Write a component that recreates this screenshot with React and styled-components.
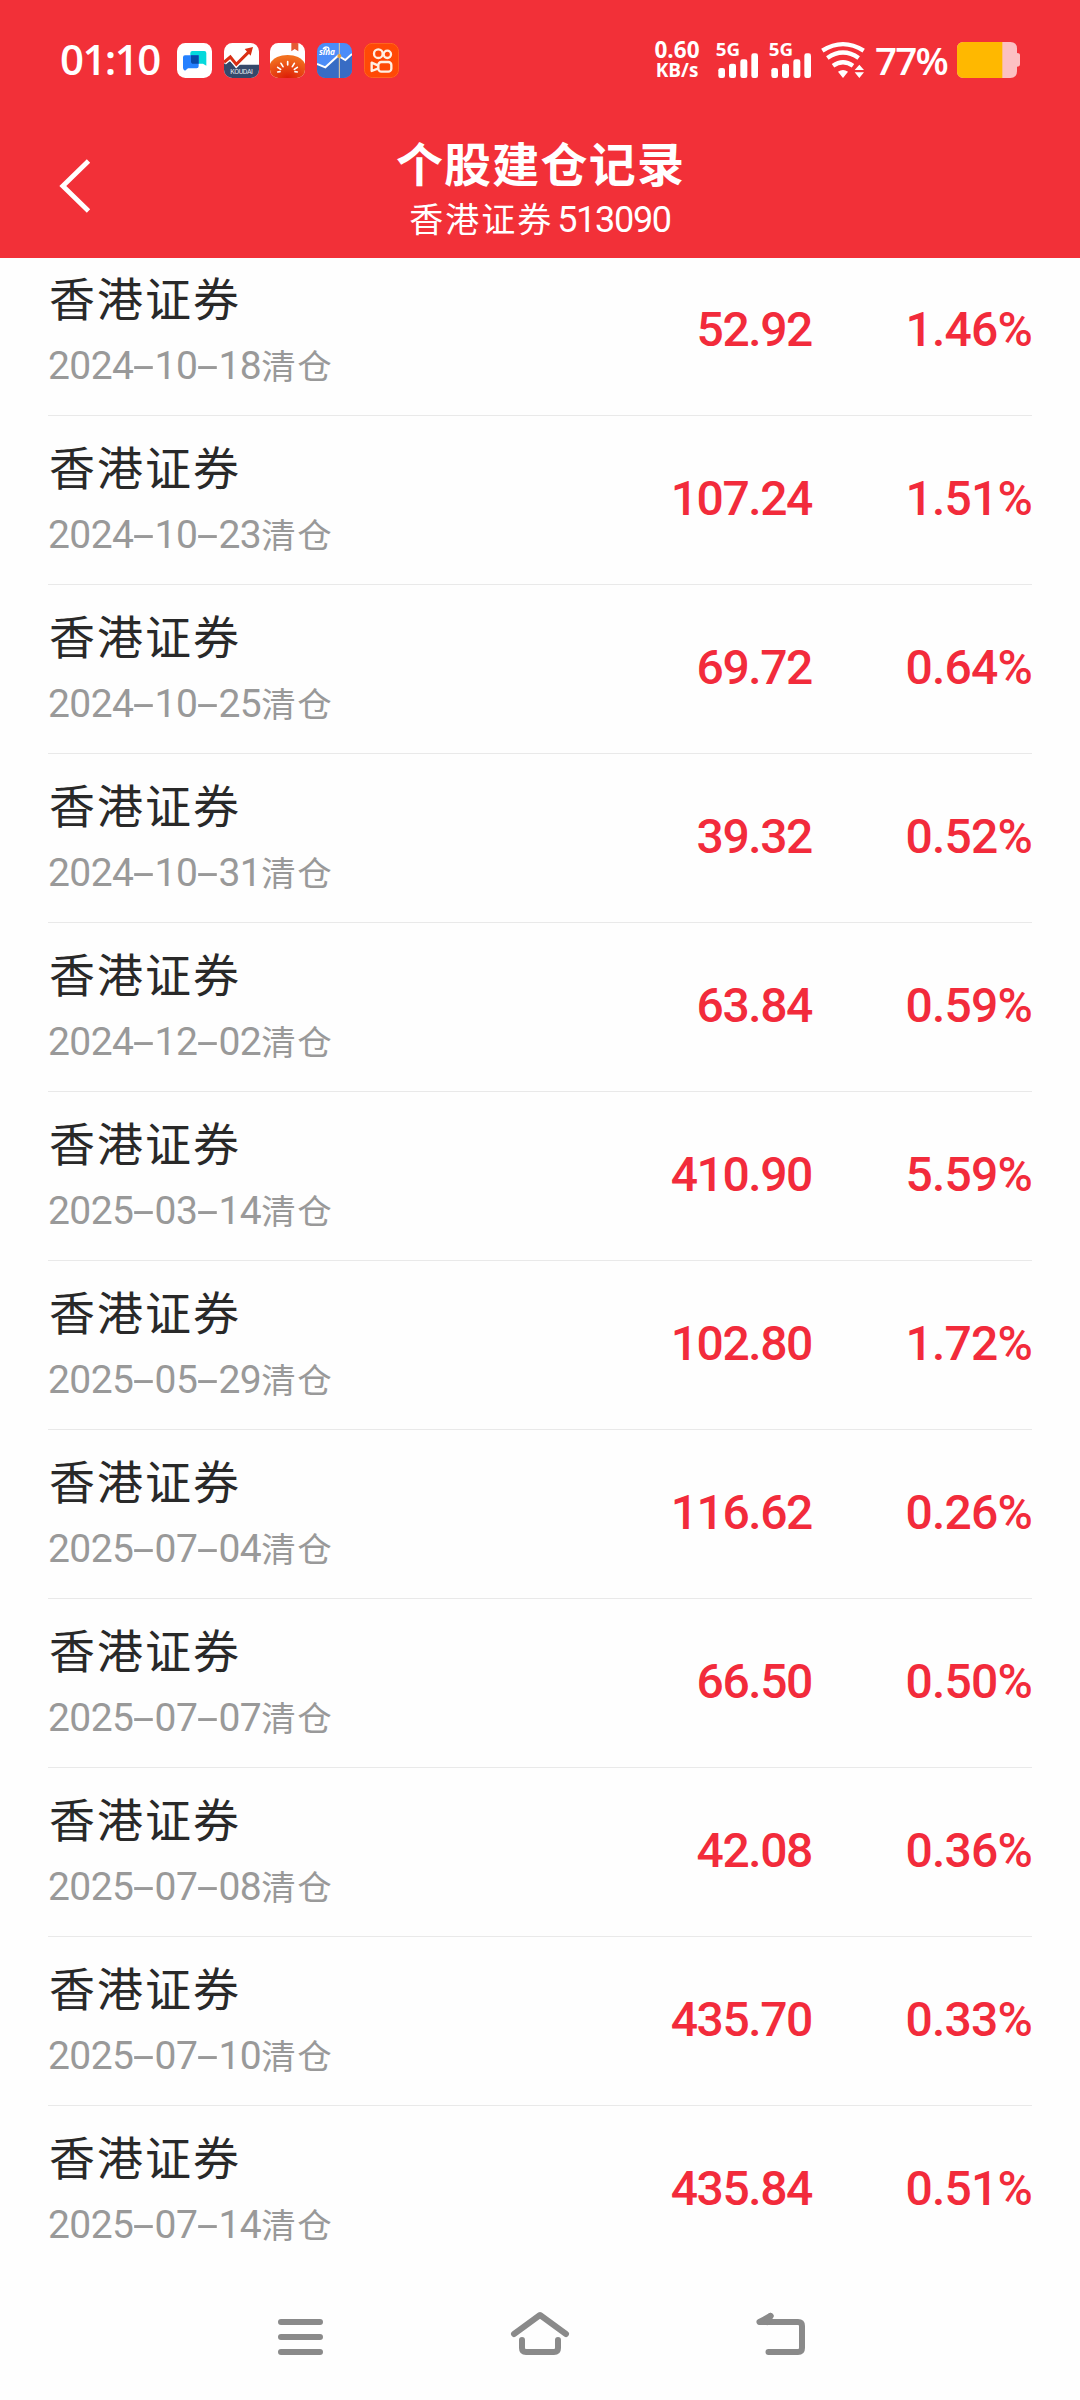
import React from 'react';
import styled, { createGlobalStyle } from 'styled-components';

const GlobalStyle = createGlobalStyle`
    * {
        box-sizing: border-box;
    }
    body {
        margin: 0;
        background: #fefefe;
        font-family: Roboto, "Noto Sans CJK SC", sans-serif;
    }
    svg {
        display: block;
        flex: none;
        overflow: visible;
    }
`;

const Screen = styled.div`
    width: 1080px;
    height: 2400px;
    overflow: hidden;
    display: flex;
    flex-direction: column;
    background: #fefefe;
`;

const Top = styled.header`
    flex: none;
    height: 258px;
    background: #f23038;
    color: #fff;
`;

const StatusBar = styled.div`
    height: 120px;
    padding: 0 60px 0 60px;
    display: flex;
    align-items: center;
    font-family: "Open Sans", sans-serif;
`;

const Clock = styled.div`
    width: 117px;
    padding-bottom: 2px;
    font-size: 42px;
    line-height: 60px;
    font-weight: 600;
    letter-spacing: -1.6px;
    white-space: nowrap;
`;

const AppIcons = styled.div`
    display: flex;
    gap: 11.7px;
`;

const StatusRight = styled.div`
    margin-left: auto;
    display: flex;
    align-items: center;
`;

const Speed = styled.div`
    width: 50px;
    margin-right: 14px;
    padding-bottom: 1px;
    text-align: center;
    font-weight: 700;
    font-size: 22.5px;
    line-height: 20px;
`;

const SpeedUnit = styled.div`
    font-size: 19px;
`;

const Signals = styled.div`
    display: flex;
    gap: 11px;
    margin-right: 10px;
`;

const Percent = styled.div`
    width: 92px;
    padding: 0 0 1px 10px;
    font-size: 38.5px;
    line-height: 60px;
    font-weight: 600;
    letter-spacing: -1.8px;
    white-space: nowrap;
`;

const TitleBar = styled.div`
    height: 138px;
    display: grid;
    grid-template-columns: 150px 1fr 150px;
`;

const BackButton = styled.div`
    padding: 39px 0 0 60px;
`;

const Titles = styled.div`
    padding-top: 16px;
    text-align: center;
    white-space: nowrap;
`;

const Title = styled.h1`
    margin: 0;
    padding-left: 1px;
    font-size: 47px;
    line-height: 60px;
    font-weight: 700;
    letter-spacing: 1.2px;
`;

const Subtitle = styled.div`
    display: flex;
    justify-content: center;
    align-items: center;
    gap: 4px;
    font-size: 34px;
    line-height: 48px;
    font-weight: 400;
    letter-spacing: 2px;
`;

const Code = styled.span`
    font-size: 36px;
    letter-spacing: -1.3px;
`;

const ListWrap = styled.main`
    height: 2022px;
    overflow: hidden;
`;

/* list is scrolled a little, so the first row goes under the header */
const List = styled.div`
    margin: -11px 48px 0;
`;

const RowWrap = styled.div`
    height: 169px;
    display: grid;
    grid-template-columns: 1fr 300px 220px;
    border-bottom: ${({ $last }) => ($last ? 'none' : '1px solid #e9e9e9')};
`;

const Name = styled.div`
    padding: 23px 0 0 1px;
    font-size: 46px;
    line-height: 60px;
    letter-spacing: 2px;
    color: #292929;
`;

const DateLine = styled.div`
    display: flex;
    align-items: center;
    height: 54px;
    margin-top: 9px;
    font-size: 39px;
    letter-spacing: -0.6px;
    color: #999;
`;

const Dash = styled.span`
    width: 21.3px;
    text-align: center;
    letter-spacing: 0;
    transform: scaleX(2);
`;

const Cleared = styled.span`
    padding-bottom: 4px;
    font-size: 34.5px;
    letter-spacing: 1.5px;
`;

const Figure = styled.div`
    text-align: right;
    line-height: 166px;
    font-size: 48px;
    font-weight: 500;
    letter-spacing: ${({ $tight }) => ($tight ? '-1.4px' : '-0.8px')};
    color: #f22b3b;
`;

const NavBar = styled.nav`
    height: 120px;
    padding: 0 180px 45px;
    display: grid;
    grid-template-columns: repeat(3, 240px);
    justify-items: center;
    align-items: end;
`;

const records = [
    { date: '2024-10-18', profit: '52.92', rate: '1.46%' },
    { date: '2024-10-23', profit: '107.24', rate: '1.51%' },
    { date: '2024-10-25', profit: '69.72', rate: '0.64%' },
    { date: '2024-10-31', profit: '39.32', rate: '0.52%' },
    { date: '2024-12-02', profit: '63.84', rate: '0.59%' },
    { date: '2025-03-14', profit: '410.90', rate: '5.59%' },
    { date: '2025-05-29', profit: '102.80', rate: '1.72%' },
    { date: '2025-07-04', profit: '116.62', rate: '0.26%' },
    { date: '2025-07-07', profit: '66.50', rate: '0.50%' },
    { date: '2025-07-08', profit: '42.08', rate: '0.36%' },
    { date: '2025-07-10', profit: '435.70', rate: '0.33%' },
    { date: '2025-07-14', profit: '435.84', rate: '0.51%' },
];

const AppIcon = ({ id, children }) => (
    <svg width="35" height="35" viewBox="0 0 105 105">
        <clipPath id={id}>
            <rect width="105" height="105" rx="25" />
        </clipPath>
        <g clipPath={`url(#${id})`}>{children}</g>
    </svg>
);

const ChatIcon = () => (
    <AppIcon id="chat">
        <rect width="105" height="105" fill="#fff" />
        <path d="M46 24H82Q88 24 88 30V68L78 62H46Q40 62 40 56V30Q40 24 46 24Z" fill="#04d9dc" />
        <path d="M24 37H65V70Q65 76 59 76H33L24 83Q18 80 18 75V43Q18 37 24 37Z" fill="#2480ff" />
        <path d="M42 37H65V62H46Q42 61 42 56Z" fill="#0749a8" />
    </AppIcon>
);

const KoudaiIcon = () => (
    <AppIcon id="koudai">
        <rect width="105" height="105" fill="#fff" />
        <path d="M0 62L18 54L32 68L44 65H105V105H0Z" fill="#35496b" />
        <path d="M0 58L19 42L37 64L76 25" fill="none" stroke="#fff" strokeWidth="17" />
        <path d="M0 58L19 42L37 64L76 25" fill="none" stroke="#da2f14" strokeWidth="9" />
        <path d="M62 18L87 12L80 38Z" fill="#da2f14" />
        <text x="53" y="93" fontSize="21" textAnchor="middle" textLength="68" fill="#e4e8ee" fontFamily="Roboto">KOUDAI</text>
    </AppIcon>
);

const TomatoIcon = () => (
    <AppIcon id="tomato">
        <radialGradient id="tomatoSkin" cx="0.5" cy="1" r="0.9">
            <stop offset="0" stopColor="#dc1c06" />
            <stop offset="1" stopColor="#f2701f" />
        </radialGradient>
        <rect width="105" height="105" fill="#fff" />
        <path d="M64 0H85V25L74 18L64 25Z" fill="#e55a34" />
        <path d="M0 62C10 44 30 36 53 36S95 44 105 62V105H0Z" fill="url(#tomatoSkin)" />
        <g stroke="#fff" strokeWidth="5" strokeLinecap="round">
            <path d="M53 56V66M33 61L39 71M73 61L67 71M23 73L32 79M82 73L73 79M23 87L30 86M82 87L75 86" />
        </g>
    </AppIcon>
);

const SinaIcon = () => (
    <AppIcon id="sina">
        <rect width="105" height="105" fill="#4b8cf8" />
        <path d="M0 63L25 73L63 38L85 51L105 33V105H0Z" fill="#386cc4" />
        <path d="M0 63L25 73L63 38L85 51L105 33" fill="none" stroke="#fff" strokeWidth="6" />
        <path d="M67 0V105" stroke="#e4c9a0" strokeWidth="3" />
        <circle cx="67" cy="39" r="6" fill="#e9a13c" />
        <path d="M18 19Q22 9 33 13Q38 17 34 23M24 21Q26 16 30 19" fill="none" stroke="#fff" strokeWidth="4" />
        <text x="6" y="37" fontSize="25" fontStyle="italic" fontWeight="700" textLength="48" fill="#fff" fontFamily="Open Sans">sina</text>
    </AppIcon>
);

const KuaishouIcon = () => (
    <AppIcon id="kuaishou">
        <rect width="105" height="105" fill="#ff4906" />
        <rect x="1" y="1" width="103" height="103" rx="24" fill="none" stroke="#ff7a35" strokeWidth="2" />
        <g fill="none" stroke="#fff0e4" strokeWidth="7" strokeLinejoin="round">
            <circle cx="43" cy="32" r="13" />
            <circle cx="70" cy="34" r="11" />
            <rect x="43" y="57" width="39" height="29" rx="9" />
            <path d="M43 68L23 59V84L43 76" />
        </g>
    </AppIcon>
);

const Signal = () => (
    <svg width="42" height="36" viewBox="0 0 126 108">
        <text x="-1" y="41" fontSize="54" fontWeight="700" textLength="73" lengthAdjust="spacingAndGlyphs" fill="#fff">5G</text>
        <g fill="#fff">
            <rect x="7" y="78" width="20" height="30" rx="7" />
            <rect x="39" y="65" width="21" height="43" rx="7" />
            <rect x="73" y="52" width="21" height="56" rx="7" />
            <rect x="106" y="34" width="20" height="74" rx="7" />
        </g>
    </svg>
);

const Wifi = () => (
    <svg width="44" height="36" viewBox="0 0 132 108">
        <g fill="none" stroke="#fff" strokeWidth="13">
            <path d="M4 26Q66 -13 128 26" />
            <path d="M19 48Q66 15 113 48" />
            <path d="M36 71Q66 50 96 71" />
        </g>
        <path d="M51 89Q66 79 81 89L66 108Z" fill="#fff" />
        <path d="M115 68L129 84H101ZM115 108L101 91H129Z" fill="#fff" />
    </svg>
);

const Battery = () => (
    <svg width="63" height="36" viewBox="0 0 189 108">
        <clipPath id="batteryBody">
            <path d="M20 0H160Q180 0 180 20V33Q189 33 189 40V67Q189 74 180 74V88Q180 108 160 108H20Q0 108 0 88V20Q0 0 20 0Z" />
        </clipPath>
        <g clipPath="url(#batteryBody)">
            <rect width="189" height="108" fill="#fcc0c3" />
            <rect width="136" height="108" fill="#ffb800" />
        </g>
    </svg>
);

const MenuIcon = () => (
    <svg width="45" height="36" viewBox="0 0 45 36">
        <path d="M3 3H42M3 18H42M3 33H42" stroke="#8a8a8a" strokeWidth="6" strokeLinecap="round" />
    </svg>
);

const HomeIcon = () => (
    <svg width="58" height="43" viewBox="0 0 58 43" fill="none" stroke="#8a8a8a" strokeLinecap="round" strokeLinejoin="round">
        <path d="M3 22L29 3L55 22" strokeWidth="6" />
        <path d="M11 28V36Q11 40 15 40H43Q47 40 47 36V28" strokeWidth="6" />
    </svg>
);

const ReturnIcon = () => (
    <svg width="49" height="42" viewBox="0 0 49 42" fill="none" stroke="#8a8a8a" strokeWidth="6" strokeLinecap="round" strokeLinejoin="round">
        <path d="M14.5 3L3.5 9H42Q46 9 46 13V35Q46 39 42 39H12.5" />
        <path d="M14.5 3L11 9" />
    </svg>
);

const Row = ({ date, profit, rate, last }) => {
    const parts = date.split('-');
    return (
        <RowWrap $last={last}>
            <div>
                <Name>香港证券</Name>
                <DateLine>
                    <span>{parts[0]}</span>
                    <Dash>-</Dash>
                    <span>{parts[1]}</span>
                    <Dash>-</Dash>
                    <span>{parts[2]}</span>
                    <Cleared>清仓</Cleared>
                </DateLine>
            </div>
            <Figure $tight>{profit}</Figure>
            <Figure>{rate}</Figure>
        </RowWrap>
    );
};

const App = () => {
    return (
        <Screen>
            <GlobalStyle />
            <Top>
                <StatusBar>
                    <Clock>01:10</Clock>
                    <AppIcons>
                        <ChatIcon />
                        <KoudaiIcon />
                        <TomatoIcon />
                        <SinaIcon />
                        <KuaishouIcon />
                    </AppIcons>
                    <StatusRight>
                        <Speed>
                            0.60
                            <SpeedUnit>KB/s</SpeedUnit>
                        </Speed>
                        <Signals>
                            <Signal />
                            <Signal />
                        </Signals>
                        <Wifi />
                        <Percent>77%</Percent>
                        <Battery />
                    </StatusRight>
                </StatusBar>
                <TitleBar>
                    <BackButton>
                        <svg width="31" height="54" viewBox="0 0 31 54">
                            <path d="M28.5 2L2.8 27L28.5 52" fill="none" stroke="#fff" strokeWidth="4.8" />
                        </svg>
                    </BackButton>
                    <Titles>
                        <Title>个股建仓记录</Title>
                        <Subtitle>
                            香港证券
                            <Code>513090</Code>
                        </Subtitle>
                    </Titles>
                </TitleBar>
            </Top>
            <ListWrap>
                <List>
                    {records.map((item, i) => (
                        <Row key={item.date} {...item} last={i === records.length - 1} />
                    ))}
                </List>
            </ListWrap>
            <NavBar>
                <MenuIcon />
                <HomeIcon />
                <ReturnIcon />
            </NavBar>
        </Screen>
    );
};

export default App;
